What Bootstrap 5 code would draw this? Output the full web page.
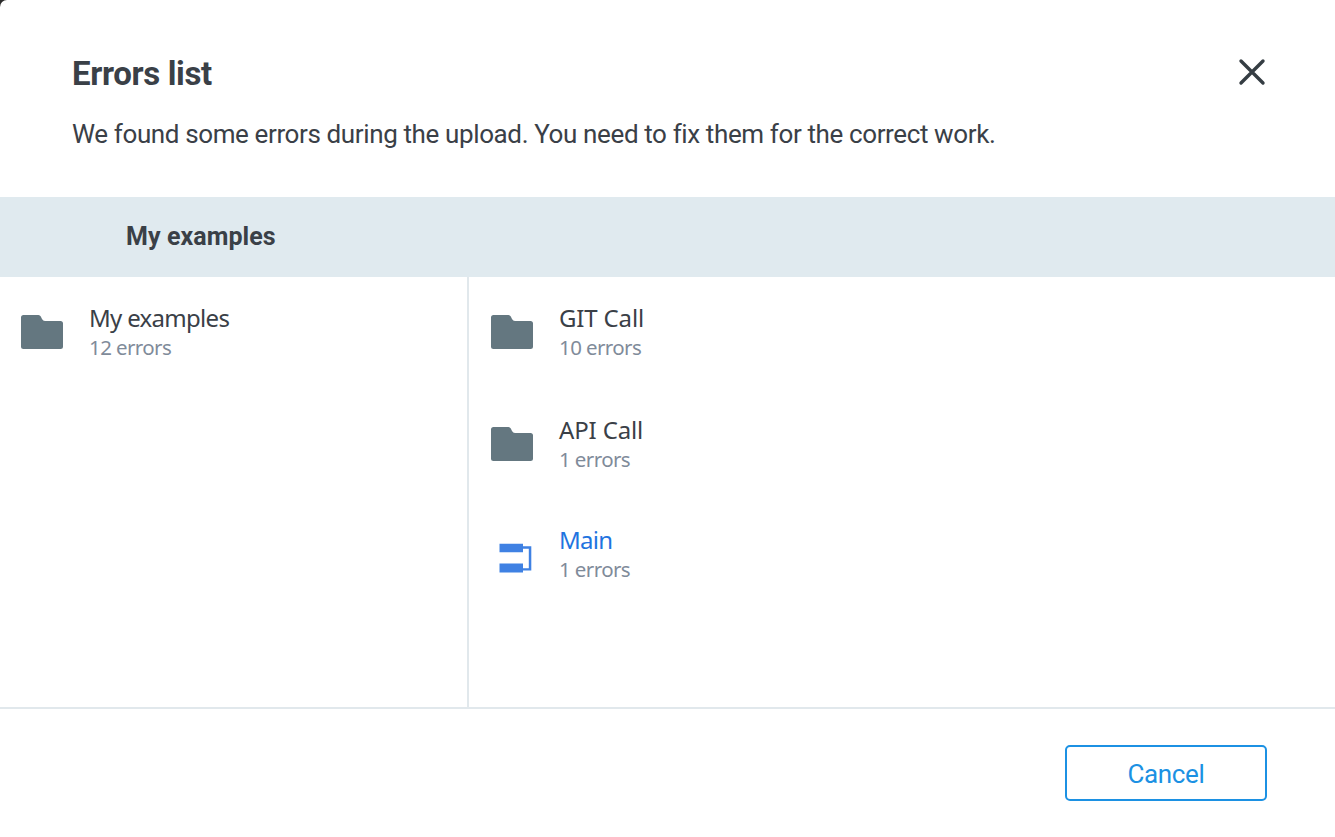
<!DOCTYPE html>
<html lang="en">
<head>
<meta charset="utf-8">
<meta name="viewport" content="width=device-width, initial-scale=1">
<title>Errors list</title>
<link href="https://cdn.jsdelivr.net/npm/bootstrap@5.3.0/dist/css/bootstrap.min.css" rel="stylesheet">
<style>
  body { background: #2b2b2b; color: #3a4047; font-family: Roboto, "Liberation Sans", sans-serif; }
  .dialog-box { border-radius: 7px 0 0 0; }
  .dialog-head { height: 197px; padding: 54px 67px 0 72px; }
  .dialog-title { font-size: 33px; line-height: 40px; font-weight: 700; letter-spacing: -.35px; }
  .dialog-text { font-size: 26px; line-height: 32px; margin-top: 24px; letter-spacing: -.378px; }
  .close-btn { width: 32px; height: 32px; margin-top: 2px; }
  .crumb-bar { height: 80px; background: #e0eaef; padding: 0 0 1px 126px; font-size: 25px; font-weight: 700; letter-spacing: .07px; }
  .pane-area { height: 432px; border-bottom: 2px solid #e1e8ec; }
  .pane-left { width: 469px; border-right: 2px solid #e1e8ec; padding: 27px 0 0 20px; }
  .pane-right { padding: 27px 0 0 21px; }
  .entry { height: 112px; font-family: "Noto Sans", sans-serif; }
  .entry-main { margin-top: -2px; }
  .entry-icon { width: 44px; height: 36px; margin: 10px 25px 0 0; }
  .entry-name { font-size: 24px; line-height: 28px; letter-spacing: -.7px; }
  .entry-name.entry-caps { letter-spacing: -.15px; }
  .entry-note { font-size: 20.5px; line-height: 30px; letter-spacing: -.6px; color: #7f8b9a; }
  .entry-link { color: #1f74e0; }
  .dialog-foot { height: 128px; padding: 36px 68px 0 0; }
  .btn-cancel { --bs-btn-color: #1c91e3; --bs-btn-border-color: #1c91e3; --bs-btn-hover-color: #fff; --bs-btn-hover-bg: #1c91e3;
    width: 202px; height: 56px; border-width: 2px; border-radius: 5px; font-size: 26px; line-height: 32px; letter-spacing: -.35px; padding: 2px 0 0; }
</style>
</head>
<body class="overflow-hidden">
<svg class="d-none" aria-hidden="true">
  <symbol id="folder" viewBox="0 0 44 36"><path fill="#647780" d="M3.500 1H18.500Q20 1 20.800 2.500L22 5Q23 7 25 7H40.500Q43 7 43 9.500V32.500Q43 35 40.500 35H3.500Q1 35 1 32.500V3.500Q1 1 3.500 1Z"/></symbol>
  <symbol id="process" viewBox="0 0 44 36"><path fill="#3f81e3" d="M9.500 1.700H33V4.300H41.300V28.500H33V30.500H9.500V21.500H33V26.200H38.800V6.800H33V10.300H9.500Z"/></symbol>
</svg>
<main class="dialog-box bg-white">
  <header class="dialog-head d-flex justify-content-between align-items-start">
    <div>
      <h1 class="dialog-title mb-0">Errors list</h1>
      <p class="dialog-text mb-0">We found some errors during the upload. You need to fix them for the correct work.</p>
    </div>
    <button type="button" class="close-btn btn p-0 border-0 d-flex" aria-label="Close">
      <svg width="32" height="32" viewBox="0 0 32 32"><path d="M5 5 27 27M27 5 5 27" stroke="#353d43" stroke-width="3.400" stroke-linecap="round"/></svg>
    </button>
  </header>
  <div class="crumb-bar d-flex align-items-center">My examples</div>
  <div class="pane-area d-flex">
    <div class="pane-left flex-shrink-0">
      <div class="entry d-flex align-items-start">
        <svg class="entry-icon"><use href="#folder"/></svg>
        <div><div class="entry-name">My examples</div><div class="entry-note">12 errors</div></div>
      </div>
    </div>
    <div class="pane-right flex-grow-1">
      <div class="entry d-flex align-items-start">
        <svg class="entry-icon"><use href="#folder"/></svg>
        <div><div class="entry-name entry-caps">GIT Call</div><div class="entry-note">10 errors</div></div>
      </div>
      <div class="entry d-flex align-items-start">
        <svg class="entry-icon"><use href="#folder"/></svg>
        <div><div class="entry-name entry-caps">API Call</div><div class="entry-note">1 errors</div></div>
      </div>
      <div class="entry entry-main d-flex align-items-start">
        <svg class="entry-icon mt-3"><use href="#process"/></svg>
        <div><div class="entry-name entry-link">Main</div><div class="entry-note">1 errors</div></div>
      </div>
    </div>
  </div>
  <footer class="dialog-foot d-flex justify-content-end align-items-start">
    <button type="button" class="btn btn-outline-primary btn-cancel">Cancel</button>
  </footer>
</main>
<script src="https://cdn.jsdelivr.net/npm/bootstrap@5.3.0/dist/js/bootstrap.bundle.min.js"></script>
</body>
</html>
